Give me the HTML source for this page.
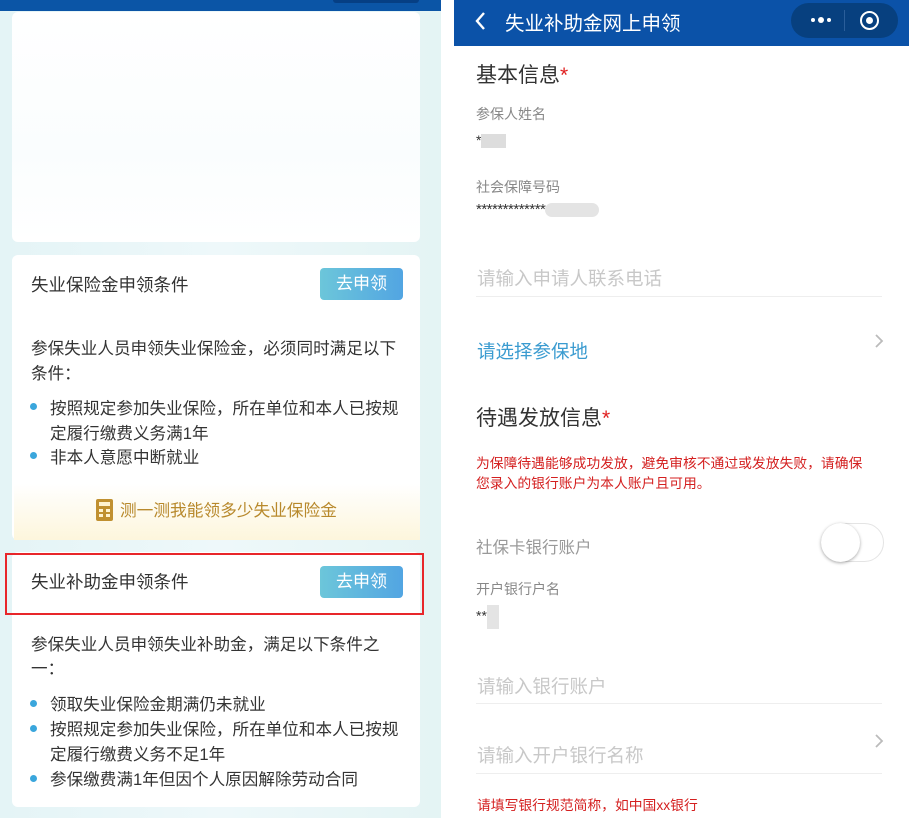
<!DOCTYPE html>
<html><head><meta charset="utf-8"><style>
*{margin:0;padding:0;box-sizing:border-box}
body{width:909px;height:818px;position:relative;overflow:hidden;background:#fff;font-family:"Liberation Sans","Noto Sans CJK SC",sans-serif;color:#333}
.a{position:absolute;white-space:nowrap}
#L{position:absolute;left:0;top:0;width:441px;height:818px;background:linear-gradient(90deg,#e4f4f6,#eef8fa 50%,#e4f4f4);overflow:hidden}
.card{position:absolute;left:12px;width:408px;background:#fff;border-radius:6px}
.btn{position:absolute;left:320px;width:83px;height:32px;border-radius:4px;background:linear-gradient(90deg,#6cc6da,#52a5e2);color:#fff;font-size:17px;line-height:32px;text-align:center}
.t17{font-size:17.5px;color:#333}
.b15{font-size:16.6px;color:#333}
.dot{position:absolute;width:7px;height:7px;border-radius:50%;background:#3aa6dc}
#R{position:absolute;left:454px;top:0;width:455px;height:818px;background:#fff}
.lab{font-size:14px;color:#888}
.ph{font-size:18.5px;color:#c8c8c8}
.line{position:absolute;left:476px;width:406px;height:1px;background:#eee}
.red{font-size:13.8px;color:#d42020}
</style></head><body>
<div id="L">
<div style="position:absolute;left:0;top:0;width:441px;height:11px;background:#0b55a6"></div>
<div style="position:absolute;left:333px;top:0;width:86px;height:3px;background:#063f84;border-radius:0 0 6px 6px"></div>
<div class="card" style="top:12px;height:230px;background:linear-gradient(#fff,#fafdfe 60%,#fff)"></div>
<div class="card" style="top:255px;height:285px"></div>
<div class="a t17" style="left:31px;top:272px">失业保险金申领条件</div>
<div class="btn" style="top:268px">去申领</div>
<div class="a b15" style="left:31px;top:335px">参保失业人员申领失业保险金，必须同时满足以下</div>
<div class="a b15" style="left:31px;top:360px">条件：</div>
<div class="dot" style="left:30px;top:403px"></div>
<div class="a b15" style="left:50px;top:395px">按照规定参加失业保险，所在单位和本人已按规</div>
<div class="a b15" style="left:50px;top:420px">定履行缴费义务满1年</div>
<div class="dot" style="left:30px;top:452px"></div>
<div class="a b15" style="left:50px;top:444px">非本人意愿中断就业</div>
<div style="position:absolute;left:14px;top:484px;width:406px;height:56px;background:linear-gradient(#fff,#fdf6dc);"></div>
<div style="position:absolute;left:96px;top:499px;width:17px;height:22px;background:#c09030;border-radius:2px"><div style="position:absolute;left:3px;top:3px;width:11px;height:4px;background:#fff3d0"></div><div style="position:absolute;left:3px;top:10px;width:4px;height:3px;background:#fff3d0"></div><div style="position:absolute;left:10px;top:10px;width:4px;height:3px;background:#fff3d0"></div><div style="position:absolute;left:3px;top:15px;width:4px;height:3px;background:#fff3d0"></div><div style="position:absolute;left:10px;top:15px;width:4px;height:3px;background:#fff3d0"></div></div>
<div class="a" style="left:120px;top:497px;font-size:16.7px;color:#b8892c">测一测我能领多少失业保险金</div>
<div class="card" style="top:552px;height:255px"></div>
<div style="position:absolute;left:5px;top:553px;width:419px;height:62px;border:2px solid #e8262a"></div>
<div class="a t17" style="left:31px;top:569px">失业补助金申领条件</div>
<div class="btn" style="top:566px">去申领</div>
<div class="a b15" style="left:31px;top:631px">参保失业人员申领失业补助金，满足以下条件之</div>
<div class="a b15" style="left:31px;top:655px">一：</div>
<div class="dot" style="left:30px;top:700px"></div>
<div class="a b15" style="left:50px;top:691px">领取失业保险金期满仍未就业</div>
<div class="dot" style="left:30px;top:725px"></div>
<div class="a b15" style="left:50px;top:716px">按照规定参加失业保险，所在单位和本人已按规</div>
<div class="a b15" style="left:50px;top:741px">定履行缴费义务不足1年</div>
<div class="dot" style="left:30px;top:775px"></div>
<div class="a b15" style="left:50px;top:766px">参保缴费满1年但因个人原因解除劳动合同</div>
</div>
<div id="R">
<div style="position:absolute;left:0;top:0;width:455px;height:46px;background:#0b52a8"></div>
<svg class="a" style="left:20px;top:10px" width="14" height="22"><path d="M10 3 L3 11 L10 19" stroke="#fff" stroke-width="2.4" fill="none"/></svg>
<div class="a" style="left:51px;top:7px;font-size:19.5px;color:#fff">失业补助金网上申领</div>
<div style="position:absolute;left:337px;top:3px;width:107px;height:35px;border-radius:18px;background:#07407f"></div>
<div style="position:absolute;left:390px;top:10px;width:1px;height:21px;background:#2a5e9a"></div>
<div style="position:absolute;left:357px;top:18px;width:4px;height:4px;border-radius:50%;background:#fff"></div>
<div style="position:absolute;left:364px;top:17px;width:6px;height:6px;border-radius:50%;background:#fff"></div>
<div style="position:absolute;left:373px;top:18px;width:4px;height:4px;border-radius:50%;background:#fff"></div>
<div style="position:absolute;left:406px;top:11px;width:19px;height:19px;border-radius:50%;border:2.5px solid #fff"></div>
<div style="position:absolute;left:412px;top:17px;width:7px;height:7px;border-radius:50%;background:#fff"></div>
</div>
<div class="a" style="left:476px;top:59px;font-size:21px;color:#333">基本信息<span style="color:#e02020">*</span></div>
<div class="a lab" style="left:476px;top:104px">参保人姓名</div>
<div class="a" style="left:476px;top:132px;font-size:14px;color:#333">*<span style="display:inline-block;width:25px;height:14px;background:#ddd;vertical-align:middle"></span></div>
<div class="a lab" style="left:476px;top:177px">社会保障号码</div>
<div class="a" style="left:476px;top:201px;font-size:15px;color:#333;letter-spacing:-0.5px">*************<span style="display:inline-block;width:54px;height:14px;background:#e4e4e4;border-radius:7px;vertical-align:middle"></span></div>
<div class="a ph" style="left:477px;top:265px">请输入申请人联系电话</div>
<div class="line" style="top:296px"></div>
<div class="a" style="left:477px;top:338px;font-size:18.5px;color:#3a9bd0">请选择参保地</div>
<svg class="a" style="left:874px;top:333px" width="10" height="16"><path d="M2 2 L8 8 L2 14" stroke="#bbb" stroke-width="1.8" fill="none"/></svg>
<div class="a" style="left:476px;top:402px;font-size:21px;color:#333">待遇发放信息<span style="color:#e02020">*</span></div>
<div class="a red" style="left:476px;top:452px">为保障待遇能够成功发放，避免审核不通过或发放失败，请确保</div>
<div class="a red" style="left:476px;top:472px">您录入的银行账户为本人账户且可用。</div>
<div class="a" style="left:476px;top:534px;font-size:16.5px;color:#999">社保卡银行账户</div>
<div style="position:absolute;left:821px;top:523px;width:63px;height:39px;border-radius:20px;border:1px solid #e4e4e4;background:#fff"></div>
<div style="position:absolute;left:821px;top:523px;width:39px;height:39px;border-radius:50%;background:#fff;box-shadow:0 1px 3px rgba(0,0,0,.35)"></div>
<div class="a lab" style="left:476px;top:579px">开户银行户名</div>
<div class="a" style="left:476px;top:605px;font-size:14px;color:#333">**<span style="display:inline-block;width:12px;height:24px;background:#e4e4e4;vertical-align:middle"></span></div>
<div class="a ph" style="left:477px;top:673px">请输入银行账户</div>
<div class="line" style="top:703px"></div>
<div class="a ph" style="left:477px;top:742px">请输入开户银行名称</div>
<svg class="a" style="left:874px;top:733px" width="10" height="16"><path d="M2 2 L8 8 L2 14" stroke="#bbb" stroke-width="1.8" fill="none"/></svg>
<div class="line" style="top:773px"></div>
<div class="a red" style="left:477px;top:794px">请填写银行规范简称，如中国xx银行</div>
</body></html>
